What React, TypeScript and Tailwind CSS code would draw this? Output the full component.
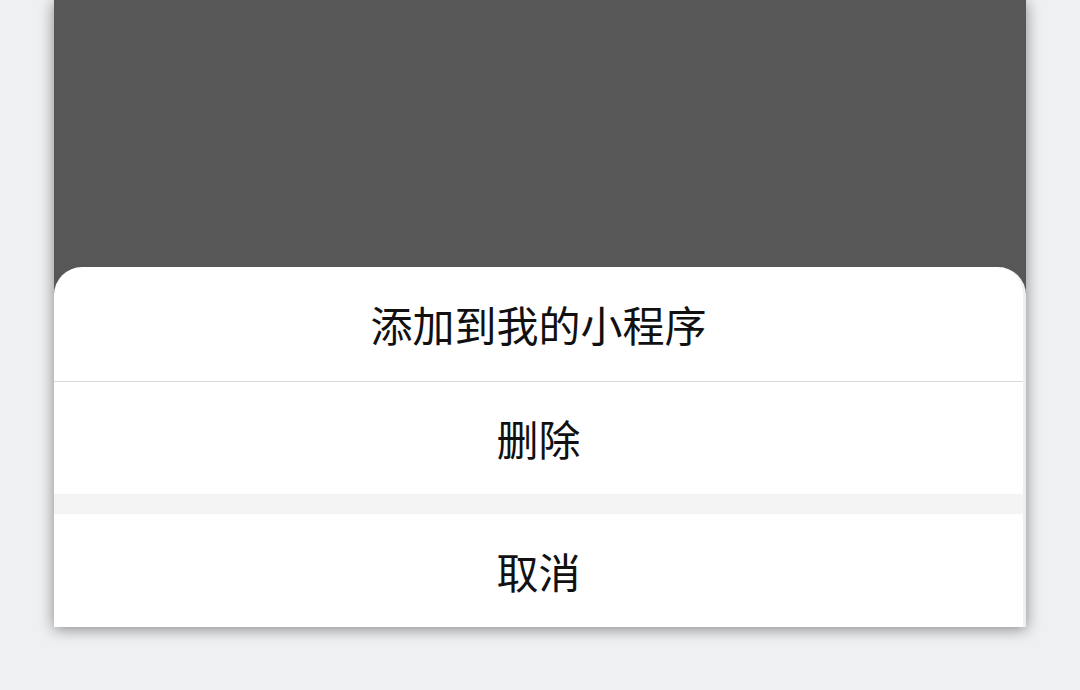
export default function App() {
  const font = { fontFamily: '"Noto Sans CJK SC", "Noto Sans", sans-serif' };

  return (
    <div className="w-full h-[690px] bg-[#eff0f2] flex justify-center" style={font}>
      <div className="w-[972px] h-[627px] flex flex-col bg-[#575757] shadow-[0_2px_14px_rgba(0,0,0,0.45)]">
        {/* dimmed page */}
        <div className="h-[267px] shrink-0" />

        {/* action sheet */}
        <div className="flex-1 flex flex-col bg-white rounded-t-[28px] overflow-hidden border-r-[3px] border-[#f0f0f2]">
          <button className="h-[115px] shrink-0 flex items-center justify-center text-[42px] text-[#111] leading-none border-b-[1.5px] border-[#d9d9d9]">
            添加到我的小程序
          </button>
          <button className="h-[112px] shrink-0 flex items-center justify-center text-[42px] text-[#111] leading-none">
            删除
          </button>
          <div className="h-[20px] shrink-0 bg-[#f4f4f4]" />
          <button className="flex-1 flex items-center justify-center text-[42px] text-[#111] leading-none">
            取消
          </button>
        </div>
      </div>
    </div>
  );
}
